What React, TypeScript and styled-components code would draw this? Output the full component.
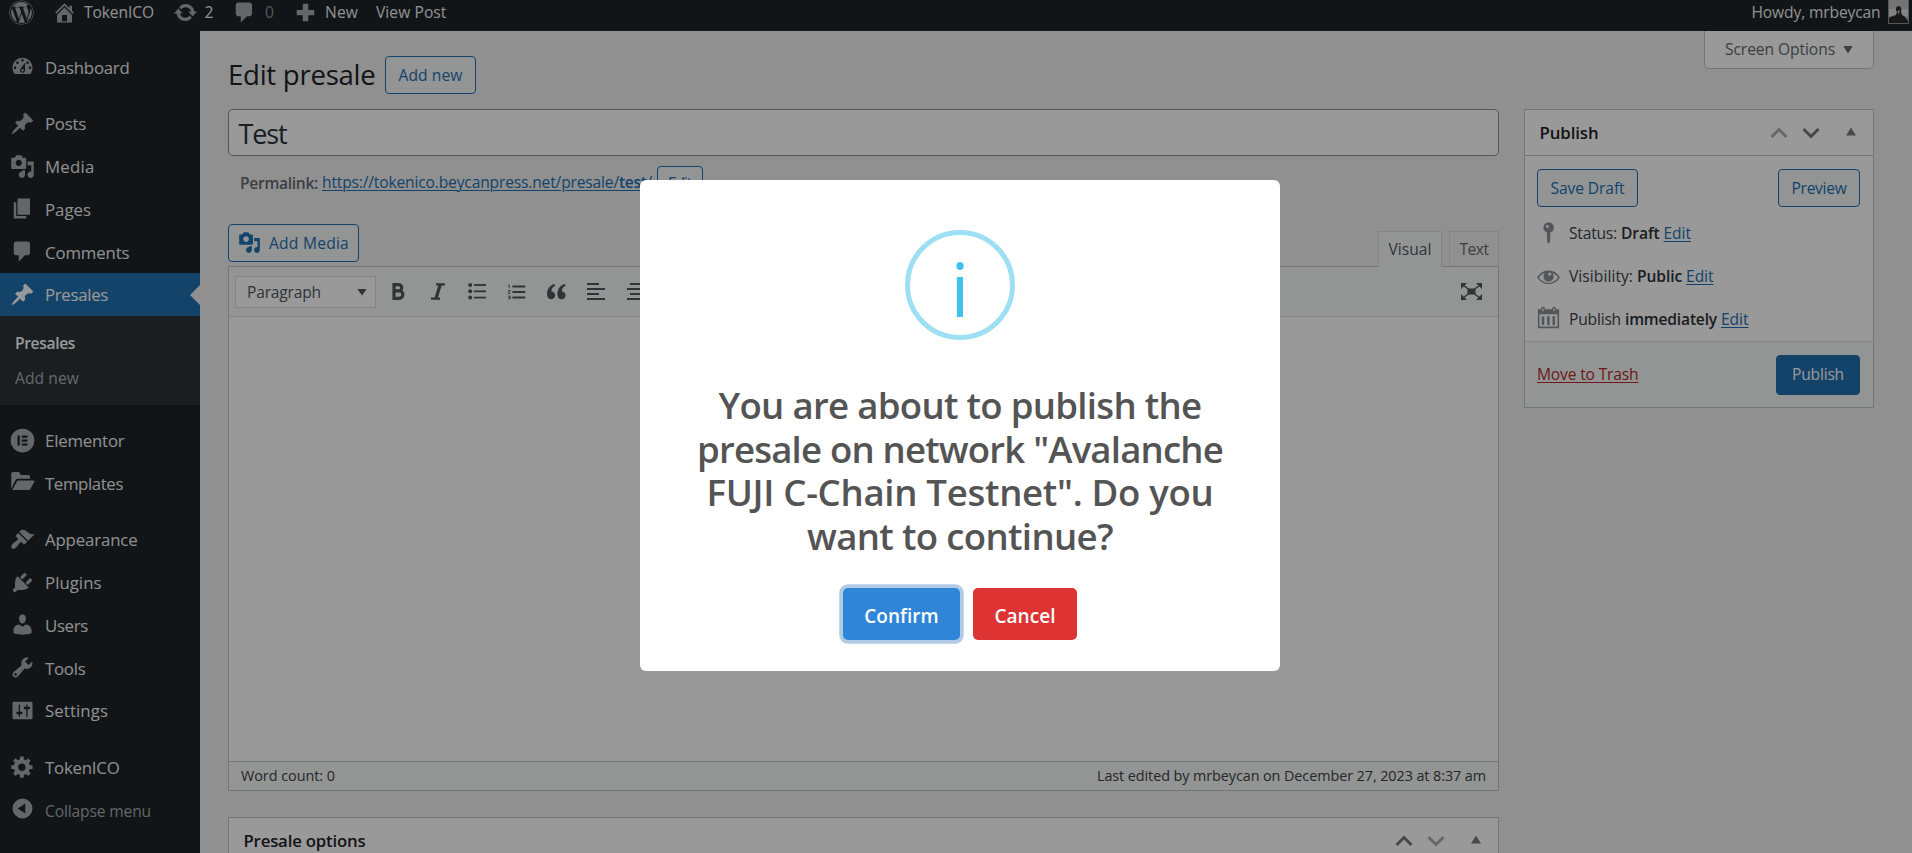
import React, { useLayoutEffect, useRef } from 'react';
import styled, { createGlobalStyle, css } from 'styled-components';
import { FaWordpress } from 'react-icons/fa';
import { MdFormatListNumbered } from 'react-icons/md';

const GlobalStyle = createGlobalStyle`
  *, *::before, *::after { box-sizing: border-box; }
  html, body { margin: 0; padding: 0; overflow: hidden; }
  body {
    background: #f0f0f1;
    color: #3c434a;
    font-family: "Segoe UI", "Open Sans", "Noto Sans", sans-serif;
    font-size: 15.6px;
    line-height: 1.4;
  }
`;

/* ---------- text ---------- */

const TextSpan = styled.span<{ $underline?: boolean }>`
  display: inline-block;
  padding-top: 1.5px;
  white-space: nowrap;
  text-decoration: ${(p) => (p.$underline ? 'underline' : 'none')};
  text-decoration-thickness: 1px;
  text-underline-offset: 2px;
`;

/* Tracks its text so that it takes up the given width in any UI font. */
function Text({ w, underline, children }: { w: number; underline?: boolean; children: React.ReactNode }) {
  const ref = useRef<HTMLSpanElement>(null);
  useLayoutEffect(() => {
    const el = ref.current;
    if (!el) return;
    el.style.letterSpacing = '0px';
    const natural = el.getBoundingClientRect().width;
    const count = (el.textContent || '').length;
    el.style.letterSpacing = `${((w - natural) / count).toFixed(3)}px`;
  }, [w]);
  return (
    <TextSpan ref={ref} $underline={underline}>
      {children}
    </TextSpan>
  );
}

/* ---------- icons ---------- */

const paths = {
  dashboard:
    'M3.76 16h12.48c1.1-1.37 1.76-3.11 1.76-5 0-4.42-3.58-8-8-8s-8 3.58-8 8c0 1.89.66 3.63 1.76 5zM10 4c.55 0 1 .45 1 1s-.45 1-1 1-1-.45-1-1 .45-1 1-1zM6 6c.55 0 1 .45 1 1s-.45 1-1 1-1-.45-1-1 .45-1 1-1zm8 0c.55 0 1 .45 1 1s-.45 1-1 1-1-.45-1-1 .45-1 1-1zm-5.37 5.55L12 7v6c0 1.1-.9 2-2 2s-2-.9-2-2c0-.57.24-1.08.63-1.45zM4 10c.55 0 1 .45 1 1s-.45 1-1 1-1-.45-1-1 .45-1 1-1zm12 0c.55 0 1 .45 1 1s-.45 1-1 1-1-.45-1-1 .45-1 1-1zm-5 3c0-.55-.45-1-1-1s-1 .45-1 1 .45 1 1 1 1-.45 1-1z',
  pin: 'M10.44 3.02l1.82-1.82 6.36 6.35-1.83 1.82c-1.05-.68-2.48-.57-3.41.36l-.75.75c-.92.93-1.04 2.35-.35 3.41l-1.83 1.82-2.41-2.41-2.8 2.79c-.42.42-3.38 2.71-3.8 2.29s1.86-3.39 2.28-3.81l2.79-2.79L4.1 9.36l1.83-1.82c1.05.69 2.48.57 3.4-.36l.75-.75c.93-.92 1.05-2.35.36-3.41z',
  media:
    'M13 11V4c0-.55-.45-1-1-1h-1.67L9 1H5L3.67 3H2c-.55 0-1 .45-1 1v7c0 .55.45 1 1 1h10c.55 0 1-.45 1-1zM7 4.5c1.38 0 2.5 1.12 2.5 2.5S8.38 9.5 7 9.5 4.5 8.38 4.5 7 5.62 4.5 7 4.5zM14 6h5v10.5c0 1.38-1.12 2.5-2.5 2.5S14 17.88 14 16.5s1.12-2.5 2.5-2.5c.17 0 .34.02.5.05V9h-3V6zm-4 8.05V13h2v3.5c0 1.38-1.12 2.5-2.5 2.5S7 17.88 7 16.5 8.12 14 9.5 14c.17 0 .34.02.5.05z',
  page: 'M6 15V2h10v13H6zm-1 1h8v2H3V5h2v11z',
  comment: 'M5 2h9c1.1 0 2 .9 2 2v7c0 1.1-.9 2-2 2h-2l-5 5v-5H5c-1.1 0-2-.9-2-2V4c0-1.1.9-2 2-2z',
  elementor: 'M10 .5a9.5 9.5 0 100 19 9.5 9.5 0 000-19zM6 6h1.8v8H6zM9.4 6H14v1.7H9.4zM9.4 9.2H14v1.7H9.4zM9.4 12.3H14V14H9.4z',
  folder:
    'M1 15.2V3.2c0-1 .6-1.7 1.5-1.7h4.2c.8 0 1 .5 1.3 1.2l.5 1.2h6c.9 0 1.5.5 1.5 1.5v1.600H6.800c-1.300 0-2 .4-2.600 1.400zM1.800 16l3.500-6.500c.4-.8.900-1.100 1.700-1.100H18.900c.7 0 .8.500.5 1.100l-2.900 5.300c-.4.800-.9 1.200-1.800 1.200z',
  appearance:
    'M14.48 11.06L7.41 3.99l1.5-1.5c.5-.56 2.3-.47 3.51.32 1.21.8 1.43 1.28 2.91 2.1 1.18.64 2.45 1.26 4.45.85zm-.71.71L6.7 4.7 4.93 6.47c-.39.39-.39 1.02 0 1.41l1.06 1.06c.39.39.39 1.03 0 1.42-.6.6-1.43 1.11-2.21 1.69-.35.26-.7.53-1.01.84C1.43 14.23.4 16.08 1.4 17.07c.99 1 2.84-.03 4.18-1.36.31-.31.58-.66.85-1.02.57-.78 1.08-1.61 1.69-2.21.39-.39 1.02-.39 1.41 0l1.06 1.06c.39.39 1.02.39 1.41 0z',
  plugins:
    'M13.11 4.36L9.87 7.6 8 5.73l3.24-3.24c.35-.34 1.05-.2 1.56.32.52.51.66 1.21.31 1.55zm-8 1.77l.91-1.12 9.01 9.01-1.19.84c-.71.71-2.63 1.16-3.82 1.16H6.14L4.9 17.26c-.59.59-1.54.59-2.12 0-.59-.58-.59-1.53 0-2.12l1.24-1.24v-3.88c0-1.13.4-3.19 1.09-3.89zm7.26 3.97l3.24-3.24c.34-.35 1.04-.21 1.55.31.52.51.66 1.21.31 1.55l-3.24 3.25z',
  users:
    'M10 9.25c-2.27 0-2.73-3.44-2.73-3.44C7 4.02 7.82 2 9.97 2c2.16 0 2.98 2.02 2.71 3.81 0 0-.41 3.44-2.68 3.44zm0 2.57L12.72 10c2.39 0 4.52 2.33 4.52 4.53v2.49s-3.65 1.13-7.24 1.13c-3.65 0-7.24-1.13-7.24-1.13v-2.49c0-2.25 1.94-4.48 4.47-4.48z',
  tools:
    'M16.68 9.77c-1.34 1.34-3.3 1.67-4.95.99l-5.41 6.52c-.99.99-2.59.99-3.58 0s-.99-2.59 0-3.57l6.52-5.42c-.68-1.65-.35-3.61.99-4.95 1.28-1.28 3.12-1.62 4.72-1.06l-2.89 2.89 2.82 2.82 2.86-2.87c.53 1.58.18 3.39-1.08 4.65zM3.81 16.21c.4.39 1.04.39 1.43 0 .4-.4.4-1.04 0-1.43-.39-.4-1.03-.4-1.43 0-.39.39-.39 1.03 0 1.43z',
  settings:
    'M18 16V4c0-.55-.45-1-1-1H3c-.55 0-1 .45-1 1v12c0 .55.45 1 1 1h14c.55 0 1-.45 1-1zM8 11h1c.55 0 1 .45 1 1s-.45 1-1 1H8v1.5c0 .28-.22.5-.5.5s-.5-.22-.5-.5V13H6c-.55 0-1-.45-1-1s.45-1 1-1h1V5.5c0-.28.22-.5.5-.5s.5.22.5.5V11zm5-2h-1c-.55 0-1-.45-1-1s.45-1 1-1h1V5.5c0-.28.22-.5.5-.5s.5.22.5.5V7h1c.55 0 1 .45 1 1s-.45 1-1 1h-1v5.5c0 .28-.22.5-.5.5s-.5-.22-.5-.5V9z',
  gear: 'M18 12h-2.18c-.17.7-.44 1.35-.81 1.93l1.54 1.54-2.1 2.1-1.54-1.54c-.58.36-1.23.63-1.91.79V19H8v-2.18c-.68-.16-1.33-.43-1.91-.79l-1.54 1.54-2.12-2.12 1.54-1.54c-.36-.58-.63-1.23-.79-1.91H1V9.03h2.17c.16-.7.44-1.35.8-1.94L2.43 5.55l2.1-2.1 1.54 1.54c.58-.37 1.24-.64 1.93-.81V2h3v2.18c.68.16 1.33.43 1.91.79l1.54-1.54 2.12 2.12-1.54 1.54c.36.59.64 1.24.8 1.94H18V12zm-8.5 1.5c1.66 0 3-1.34 3-3s-1.34-3-3-3-3 1.34-3 3 1.34 3 3 3z',
  collapse: 'M10 2a8 8 0 100 16 8 8 0 000-16zM12.200 6v8L6.200 10z',
  home: 'M16 8.5l1.53 1.53-1.06 1.06L10 4.6l-6.47 6.49-1.06-1.06L10 2.5l4 4v-2h2v4zm-6-2.46l6 5.99V18H4v-5.97zM12 17v-5H8v5h4z',
  update:
    'M10.2 3.28c3.53 0 6.43 2.61 6.92 6h2.08l-3.5 4-3.5-4h2.32c-.45-1.97-2.21-3.45-4.32-3.45-1.45 0-2.73.71-3.54 1.78L4.95 5.66C6.23 4.2 8.11 3.28 10.2 3.28zm-.4 13.44c-3.52 0-6.43-2.61-6.92-6H.8l3.5-4c1.17 1.33 2.33 2.67 3.5 4H5.48c.45 1.97 2.21 3.45 4.32 3.45 1.45 0 2.73-.71 3.54-1.78l1.71 1.95c-1.28 1.46-3.15 2.38-5.25 2.38z',
  plus: 'M12.200 3v4.900H17v4.200h-4.800V17H7.800v-4.900H3V7.900h4.800V3z',
  status:
    'M10.100 1a4.200 4.200 0 00-4.200 4.200c0 1.900 1.200 3.400 2.800 4l.2 7.300 1.200 1.700 1.200-1.700.2-7.300a4.200 4.200 0 002.800-4A4.200 4.200 0 0010.100 1zM9.100 3.100a1.200 1.200 0 110 2.400 1.200 1.200 0 010-2.400z',
  eye: 'M18.300 9.500C15 4.900 8.500 3.800 3.900 7.200c-1.200.9-2.200 2.100-3 3.400.2.4.5.8.8 1.200 3.300 4.600 9.600 5.600 14.200 2.400.9-.7 1.700-1.400 2.400-2.400.3-.4.5-.8.8-1.200-.3-.4-.5-.8-.8-1.100zm-8.200-2.300c.5-.5 1.300-.5 1.800 0s.5 1.300 0 1.800-1.300.5-1.800 0-.5-1.300 0-1.800zm-.1 7.700c-3.100 0-6-1.600-7.700-4.200C3.500 9 5.100 7.800 7 7.200c-.7.800-1 1.700-1 2.700 0 2.200 1.700 4.100 4 4.100 2.200 0 4.100-1.700 4.100-4v-.1c0-1-.4-2-1.100-2.700 1.900.6 3.500 1.800 4.700 3.500-1.700 2.600-4.600 4.200-7.700 4.200z',
  calendar:
    'M5.600.5c.9 0 1.500.6 1.500 1.500V2.500h5.800V2a1.500 1.500 0 013 0v.5H18.500v15.300H1.500V2.500H4.100V2C4.100 1.100 4.700.5 5.600.5zM5.100 2v2.200h1V2zM13.900 2v2.200h1V2zM2.800 6.600v9.800h14.400V6.600zM4.600 8.200h2v7H4.600zM8.900 8.200h2v7h-2zM13.200 8.200h2v7h-2z',
};

type IconName = keyof typeof paths;

const IconSvg = styled.svg<{ $size: number }>`
  display: block;
  flex: none;
  width: ${(p) => p.$size}px;
  height: ${(p) => p.$size}px;
  fill: currentColor;
`;

function Icon({ name, size = 25 }: { name: IconName; size?: number }) {
  return (
    <IconSvg $size={size} viewBox="0 0 20 20" fillRule="evenodd">
      <path d={paths[name]} />
    </IconSvg>
  );
}

function Chevron({ up }: { up?: boolean }) {
  return (
    <svg width="18" height="12" viewBox="0 0 18 12" fill="none" stroke="currentColor" strokeWidth="2.900">
      <path d={up ? 'M1.500 10L9 2.500L16.500 10' : 'M1.500 2L9 9.500L16.500 2'} />
    </svg>
  );
}

const Triangle = styled.span<{ $up?: boolean; $w: number; $h: number }>`
  display: block;
  width: ${(p) => p.$w}px;
  height: ${(p) => p.$h}px;
  background: currentColor;
  clip-path: ${(p) => (p.$up ? 'polygon(50% 0, 100% 100%, 0 100%)' : 'polygon(0 0, 100% 0, 50% 100%)')};
`;

/* ---------- admin bar ---------- */

const AdminBar = styled.header`
  display: flex;
  align-items: flex-start;
  flex: none;
  height: 31px;
  padding: 0 3px 0 9px;
  background: #1d2327;
  color: #f0f0f1;
`;

const BarItem = styled.div<{ $gap: number; $inner?: number; $dim?: boolean }>`
  display: flex;
  align-items: center;
  gap: ${(p) => p.$inner ?? 7}px;
  height: 24px;
  margin-left: ${(p) => p.$gap}px;
  color: ${(p) => (p.$dim ? '#8d9195' : 'inherit')};
  svg { color: #a7aaad; }
`;

const BarSpacer = styled.div`
  flex: 1;
`;

const Avatar = styled.span`
  display: block;
  width: 21px;
  height: 24px;
  margin-left: 7.5px;
  border: 1px solid #8c8f94;
  border-top: 0;
  background: #c4c4c4;
  overflow: hidden;
  svg { display: block; }
`;

/* ---------- side menu ---------- */

const Shell = styled.div`
  display: flex;
  flex-direction: column;
  width: 1912px;
  height: 853px;
  overflow: hidden;
`;

const Body = styled.div`
  display: flex;
  flex: 1;
  min-height: 0;
`;

const SideMenu = styled.nav`
  display: flex;
  flex-direction: column;
  flex: none;
  width: 200px;
  padding-top: 14.5px;
  background: #1d2327;
  color: #f0f0f1;
  font-size: 16.8px;
`;

const MenuRow = styled.div<{ $active?: boolean }>`
  position: relative;
  display: flex;
  align-items: center;
  flex: none;
  height: 42.75px;
  padding: 0 10px;
  gap: 10px;
  svg { color: #a7aaad; }
  ${(p) =>
    p.$active &&
    css`
      background: #2271b1;
      color: #fff;
      svg { color: #fff; }
      &::after {
        content: '';
        position: absolute;
        right: 0;
        top: 11.5px;
        border: 10px solid transparent;
        border-right-color: #f0f0f1;
        border-left: 0;
      }
    `}
`;

const MenuGap = styled.div`
  flex: none;
  height: 13.75px;
`;

const SubMenu = styled.div`
  display: flex;
  flex-direction: column;
  flex: none;
  height: 89.25px;
  padding: 10px 15px 0;
  background: #2c3338;
`;

const SubItem = styled.div<{ $current?: boolean }>`
  display: flex;
  align-items: center;
  height: 35.2px;
  font-size: 15.6px;
  font-weight: ${(p) => (p.$current ? 600 : 400)};
  color: ${(p) => (p.$current ? '#fff' : '#a9adb1')};
`;

const CollapseRow = styled(MenuRow)`
  margin-top: 2px;
  color: #a7aaad;
  font-size: 15.6px;
  svg { margin-top: -6px; }
`;

/* ---------- page ---------- */

const Content = styled.main`
  display: flex;
  flex: 1;
  min-width: 0;
  padding: 0 38px 0 28px;
  gap: 25px;
`;

const MainColumn = styled.section`
  display: flex;
  flex-direction: column;
  width: 1271px;
  flex: none;
  > * { flex: none; }
`;

const SideColumn = styled.aside`
  display: flex;
  flex-direction: column;
  width: 350px;
  flex: none;
`;

const ScreenOptions = styled.div`
  display: flex;
  align-items: center;
  align-self: flex-end;
  flex: none;
  gap: 8px;
  width: 170px;
  height: 38px;
  padding: 0 0 0 20px;
  margin-bottom: 40px;
  background: #fff;
  border: 1px solid #c3c4c7;
  border-top: 0;
  border-radius: 0 0 5px 5px;
  color: #646970;
`;

const PageHead = styled.div`
  display: flex;
  align-items: center;
  height: 38px;
  margin: 25px 0 15px;
  gap: 9.5px;
`;

const PageTitle = styled.h1`
  margin: 0;
  padding-bottom: 4px;
  font-size: 27.6px;
  font-weight: 400;
  line-height: 38px;
  color: #1d2327;
`;

const Button = styled.button<{ $h?: number; $px?: number; $solid?: boolean }>`
  display: inline-flex;
  align-items: center;
  flex: none;
  height: ${(p) => p.$h ?? 37.5}px;
  padding: 0 ${(p) => p.$px ?? 12.5}px;
  border: 1px solid #2271b1;
  border-radius: 4px;
  background: ${(p) => (p.$solid ? '#2271b1' : '#f6f7f7')};
  color: ${(p) => (p.$solid ? '#fff' : '#2271b1')};
  font: inherit;
`;

const TitleInput = styled.div`
  display: flex;
  align-items: center;
  height: 47px;
  padding: 2px 9.5px 0;
  border: 1px solid #8c8f94;
  border-radius: 5px;
  background: #fff;
  color: #2c3338;
  font-size: 27px;
`;

const Permalink = styled.div`
  display: flex;
  align-items: center;
  height: 34px;
  margin-top: 10px;
  padding: 0 0 0 12px;
  color: #646970;
  b { font-weight: 600; }
`;

const Link = styled.a`
  color: #2271b1;
  b { font-weight: 600; }
`;

const PermalinkUrl = styled(Link)`
  margin: 0 3.5px 2px 4px;
`;

const EditorTools = styled.div`
  display: flex;
  align-items: flex-end;
  justify-content: space-between;
  height: 42px;
  margin-top: 24px;
`;

const MediaButton = styled(Button)`
  align-self: flex-start;
  gap: 8px;
  padding: 0 9px;
`;

const Tabs = styled.div`
  display: flex;
  gap: 7px;
`;

const Tab = styled.div<{ $active?: boolean }>`
  position: relative;
  z-index: 1;
  display: flex;
  align-items: center;
  justify-content: center;
  width: ${(p) => (p.$active ? 64 : 50)}px;
  height: ${(p) => (p.$active ? 36 : 35)}px;
  margin-bottom: ${(p) => (p.$active ? -1 : 0)}px;
  border: 1px solid #dcdcde;
  border-bottom: 0;
  background: ${(p) => (p.$active ? '#f6f7f7' : '#f0f0f1')};
  color: ${(p) => (p.$active ? '#50575e' : '#646970')};
`;

const Editor = styled.div`
  display: flex;
  flex-direction: column;
  height: 525px;
  border: 1px solid #c3c4c7;
  background: #fff;
`;

const Toolbar = styled.div`
  display: flex;
  align-items: center;
  flex: none;
  height: 50px;
  padding: 0 16px 0 6px;
  background: #f6f7f7;
  border-bottom: 1px solid #dcdcde;
  color: #50575e;
`;

const FormatSelect = styled.div`
  display: flex;
  align-items: center;
  justify-content: space-between;
  width: 141px;
  height: 32px;
  margin-right: 2px;
  padding: 1px 8px 0 11px;
  border: 1px solid #dcdcde;
  background: #fff;
`;

const ToolButton = styled.span`
  display: flex;
  align-items: center;
  justify-content: center;
  width: 39.7px;
  svg { display: block; }
`;

const ToolbarSpacer = styled.span`
  flex: 1;
`;

const Canvas = styled.div`
  flex: 1;
`;

const StatusBar = styled.div`
  display: flex;
  align-items: center;
  justify-content: space-between;
  flex: none;
  height: 29px;
  padding: 0 12px 1px;
  border-top: 1px solid #c3c4c7;
  background: #f6f7f7;
  color: #3c434a;
  font-size: 14.4px;
`;

const Panel = styled.section<{ $mt?: number }>`
  flex: none;
  margin-top: ${(p) => p.$mt ?? 0}px;
  border: 1px solid #c3c4c7;
  background: #fff;
`;

const PanelHead = styled.header`
  display: flex;
  align-items: center;
  height: 46px;
  padding: 0 17px 0 14.5px;
  border-bottom: 1px solid #c3c4c7;
  color: #1d2327;
  font-size: 16.8px;
  font-weight: 600;
`;

const PanelControls = styled.div`
  display: flex;
  align-items: center;
  gap: 14px;
  margin-left: auto;
  color: #787c82;
`;

const ChevronSlot = styled.span<{ $disabled: boolean }>`
  color: ${(p) => (p.$disabled ? '#a7aaad' : '#72777c')};
  svg { display: block; }
`;

const TriangleSlot = styled.span`
  margin: 0 0 2px 12px;
`;

const PublishActions = styled.div`
  display: flex;
  justify-content: space-between;
  padding: 13px 13px 5px 12px;
`;

const MetaRow = styled.div<{ $lift?: number }>`
  display: flex;
  align-items: center;
  height: 43px;
  padding-left: 11px;
  color: #3c434a;
  b { font-weight: 600; color: #2c3338; }
  svg {
    color: #8c8f94;
    margin: 0 8px ${(p) => p.$lift ?? 0}px 0;
  }
`;

const MetaText = styled.span`
  display: flex;
  gap: 4px;
`;

const PublishFooter = styled.footer`
  display: flex;
  align-items: center;
  justify-content: space-between;
  height: 66px;
  padding: 1px 13px 0 12px;
  border-top: 1px solid #dcdcde;
  background: #f6f7f7;
`;

const TrashLink = styled.a`
  color: #b32d2e;
`;

/* ---------- dialog ---------- */

const Overlay = styled.div`
  position: fixed;
  inset: 0;
  z-index: 10;
  display: flex;
  align-items: center;
  justify-content: center;
  padding-left: 8px;
  background: rgba(0, 0, 0, 0.4);
`;

const Dialog = styled.div`
  display: flex;
  flex-direction: column;
  align-items: center;
  width: 640px;
  height: 491px;
  margin-top: -2px;
  padding-top: 50px;
  border-radius: 6px;
  background: #fff;
`;

const InfoMark = styled.div`
  display: flex;
  align-items: center;
  justify-content: center;
  flex: none;
  width: 110px;
  height: 110px;
  padding-top: 5px;
  border: 5px solid #9de0f6;
  border-radius: 50%;
  color: #3fc3ee;
  font-size: 75px;
  line-height: 100px;
`;

const DialogTitle = styled.h2`
  display: flex;
  flex-direction: column;
  align-items: center;
  margin: 42.3px 0 0;
  color: #545454;
  font-size: 36.6px;
  font-weight: 600;
  line-height: 42.2px;
`;

const DialogActions = styled.div`
  display: flex;
  gap: 13px;
  margin-top: 30.7px;
`;

const DialogButton = styled.button<{ $color: string; $focused?: boolean }>`
  display: flex;
  align-items: center;
  justify-content: center;
  width: ${(p) => (p.$focused ? 117 : 104)}px;
  height: 52px;
  padding: 3px 0 0;
  border: 0;
  border-radius: 5px;
  background: ${(p) => p.$color};
  color: #fff;
  font: inherit;
  font-size: 19px;
  font-weight: 600;
  box-shadow: ${(p) => (p.$focused ? '0 0 0 3.75px #b1cbe5' : 'none')};
`;

/* ---------- pieces ---------- */

type MenuEntry = { icon: IconName; label: string; w: number };

const contentMenu: MenuEntry[] = [
  { icon: 'pin', label: 'Posts', w: 41 },
  { icon: 'media', label: 'Media', w: 49.5 },
  { icon: 'page', label: 'Pages', w: 46 },
  { icon: 'comment', label: 'Comments', w: 84.5 },
];
const builderMenu: MenuEntry[] = [
  { icon: 'elementor', label: 'Elementor', w: 79.5 },
  { icon: 'folder', label: 'Templates', w: 78 },
];
const siteMenu: MenuEntry[] = [
  { icon: 'appearance', label: 'Appearance', w: 92.5 },
  { icon: 'plugins', label: 'Plugins', w: 56.5 },
  { icon: 'users', label: 'Users', w: 43 },
  { icon: 'tools', label: 'Tools', w: 40.5 },
  { icon: 'settings', label: 'Settings', w: 63 },
];

function MenuItem({ icon, label, w, active }: MenuEntry & { active?: boolean }) {
  return (
    <MenuRow $active={active}>
      <Icon name={icon} />
      <Text w={w}>{label}</Text>
    </MenuRow>
  );
}

function Controls({ disabled }: { disabled: 'up' | 'down' }) {
  return (
    <PanelControls>
      <ChevronSlot $disabled={disabled === 'up'}>
        <Chevron up />
      </ChevronSlot>
      <ChevronSlot $disabled={disabled === 'down'}>
        <Chevron />
      </ChevronSlot>
      <TriangleSlot>
        <Triangle $up $w={10} $h={8} />
      </TriangleSlot>
    </PanelControls>
  );
}

function AlignLines({ align }: { align: 'left' | 'center' }) {
  return (
    <svg width="18" height="17" viewBox="0 0 18 17" fill="currentColor">
      {[12, 18, 12, 18].map((w, i) => (
        <rect key={i} x={align === 'left' ? 0 : (18 - w) / 2} y={i * 5} width={w} height="2" />
      ))}
    </svg>
  );
}

export default function App() {
  return (
    <>
      <GlobalStyle />
      <Shell>
        <AdminBar>
          <BarItem $gap={0}>
            <FaWordpress size={25} />
          </BarItem>
          <BarItem $gap={18}>
            <Icon name="home" />
            <Text w={70}>TokenICO</Text>
          </BarItem>
          <BarItem $gap={18.5}>
            <Icon name="update" />
            <Text w={9.5}>2</Text>
          </BarItem>
          <BarItem $gap={18} $dim $inner={8}>
            <Icon name="comment" />
            <Text w={9.5}>0</Text>
          </BarItem>
          <BarItem $gap={18} $inner={7.5}>
            <Icon name="plus" />
            <Text w={33}>New</Text>
          </BarItem>
          <BarItem $gap={18}>
            <Text w={70.5}>View Post</Text>
          </BarItem>
          <BarSpacer />
          <BarItem $gap={0}>
            <Text w={129}>Howdy, mrbeycan</Text>
          </BarItem>
          <Avatar>
            <svg width="20" height="23" viewBox="0 0 20 23">
              <rect width="20" height="23" fill="#c2c2c2" />
              <rect y="9" width="20" height="7" fill="#dadada" />
              <path d="M0 23v-5c2-2 5-2 7-3l1-3c-2-2-1-6 1.500-6s3.500 3 2.500 6l1 3c2 1 4 2 6 6v2z" fill="#2b2b2b" />
              <path d="M8 11l3-1-1 5z" fill="#a0a0a0" />
            </svg>
          </Avatar>
        </AdminBar>

        <Body>
          <SideMenu>
            <MenuItem icon="dashboard" label="Dashboard" w={84.5} />
            <MenuGap />
            {contentMenu.map((m) => (
              <MenuItem key={m.label} {...m} />
            ))}
            <MenuItem icon="pin" label="Presales" w={63} active />
            <SubMenu>
              <SubItem $current>
                <Text w={60}>Presales</Text>
              </SubItem>
              <SubItem>
                <Text w={64}>Add new</Text>
              </SubItem>
            </SubMenu>
            <MenuGap />
            {builderMenu.map((m) => (
              <MenuItem key={m.label} {...m} />
            ))}
            <MenuGap />
            {siteMenu.map((m) => (
              <MenuItem key={m.label} {...m} />
            ))}
            <MenuGap />
            <MenuItem icon="gear" label="TokenICO" w={74.5} />
            <CollapseRow>
              <Icon name="collapse" />
              <Text w={106}>Collapse menu</Text>
            </CollapseRow>
          </SideMenu>

          <Content>
            <MainColumn>
              <PageHead>
                <PageTitle>
                  <Text w={147.5}>Edit presale</Text>
                </PageTitle>
                <Button>
                  <Text w={64}>Add new</Text>
                </Button>
              </PageHead>
              <TitleInput>
                <Text w={48}>Test</Text>
              </TitleInput>
              <Permalink>
                <b>
                  <Text w={78}>Permalink:</Text>
                </b>
                <PermalinkUrl>
                  <Text w={297} underline>
                    https://tokenico.beycanpress.net/presale/
                  </Text>
                  <b>
                    <Text w={27.5} underline>test</Text>
                  </b>
                  <Text w={6.5} underline>/</Text>
                </PermalinkUrl>
                <Button $h={34} $px={10.5}>
                  <Text w={23}>Edit</Text>
                </Button>
              </Permalink>
              <EditorTools>
                <MediaButton>
                  <Icon name="media" size={23} />
                  <Text w={80}>Add Media</Text>
                </MediaButton>
                <Tabs>
                  <Tab $active>
                    <Text w={43}>Visual</Text>
                  </Tab>
                  <Tab>
                    <Text w={29}>Text</Text>
                  </Tab>
                </Tabs>
              </EditorTools>
              <Editor>
                <Toolbar>
                  <FormatSelect>
                    <Text w={74}>Paragraph</Text>
                    <Triangle $w={10} $h={7} />
                  </FormatSelect>
                  <ToolButton>
                    <svg width="14" height="17" viewBox="0 0 14 17" fill="none" stroke="currentColor" strokeWidth="3.200">
                      <path d="M3 1.600h4.600a3 3 0 010 6.300H3zM3 7.900h5.200a3.500 3.500 0 010 7.400H3z" />
                    </svg>
                  </ToolButton>
                  <ToolButton>
                    <svg width="14" height="17" viewBox="0 0 14 17" fill="none" stroke="currentColor" strokeWidth="2.300">
                      <path d="M5 1.300h9M0 15.700h9" />
                      <path d="M9.500 1L4.800 16" strokeWidth="3.200" />
                    </svg>
                  </ToolButton>
                  <ToolButton>
                    <svg width="18" height="17" viewBox="0 0 18 17" fill="currentColor">
                      {[2, 8.3, 14.6].map((y) => (
                        <g key={y}>
                          <circle cx="2.200" cy={y} r="2" />
                          <rect x="6" y={y - 0.9} width="12" height="1.800" />
                        </g>
                      ))}
                    </svg>
                  </ToolButton>
                  <ToolButton>
                    <MdFormatListNumbered size={22} />
                  </ToolButton>
                  <ToolButton>
                    <svg width="19" height="16" viewBox="0 0 19 16" fill="currentColor">
                      <path d="M7.500 0C3 1.200 0 4.800 0 10c0 3.500 1.700 5.300 4.200 5.300 2.300 0 4-1.700 4-4s-1.600-3.800-3.600-3.900C4.300 4.500 5.500 3 8.200 2zM17.900 0c-4.500 1.200-7.500 4.800-7.500 10 0 3.500 1.700 5.300 4.200 5.300 2.300 0 4-1.700 4-4S17 7.500 15 7.400c-.3-2.900.9-4.400 3.600-5.400z" />
                    </svg>
                  </ToolButton>
                  <ToolButton>
                    <AlignLines align="left" />
                  </ToolButton>
                  <ToolButton>
                    <AlignLines align="center" />
                  </ToolButton>
                  <ToolbarSpacer />
                  <svg width="21" height="17" viewBox="0 0 21 17" fill="currentColor">
                    <path d="M2 2L19 15M19 2L2 15" stroke="currentColor" strokeWidth="1.500" />
                    <path d="M0 0h6L0 6zM21 0h-6L21 6zM0 17h6L0 11zM21 17h-6L21 11z" />
                    <rect x="6.500" y="5.500" width="8" height="6" />
                  </svg>
                </Toolbar>
                <Canvas />
                <StatusBar>
                  <Text w={94}>Word count: 0</Text>
                  <Text w={389}>Last edited by mrbeycan on December 27, 2023 at 8:37 am</Text>
                </StatusBar>
              </Editor>
              <Panel $mt={26}>
                <PanelHead>
                  <Text w={122}>Presale options</Text>
                  <Controls disabled="down" />
                </PanelHead>
              </Panel>
            </MainColumn>

            <SideColumn>
              <ScreenOptions>
                <Text w={110}>Screen Options</Text>
                <Triangle $w={10} $h={8} />
              </ScreenOptions>
              <Panel>
                <PanelHead>
                  <Text w={59}>Publish</Text>
                  <Controls disabled="up" />
                </PanelHead>
                <PublishActions>
                  <Button>
                    <Text w={74}>Save Draft</Text>
                  </Button>
                  <Button>
                    <Text w={55}>Preview</Text>
                  </Button>
                </PublishActions>
                <MetaRow>
                  <Icon name="status" />
                  <MetaText>
                    <Text w={48}>Status:</Text>
                    <b><Text w={38.5}>Draft</Text></b>
                    <Link><Text w={27.5} underline>Edit</Text></Link>
                  </MetaText>
                </MetaRow>
                <MetaRow>
                  <Icon name="eye" />
                  <MetaText>
                    <Text w={64}>Visibility:</Text>
                    <b><Text w={45}>Public</Text></b>
                    <Link><Text w={27.5} underline>Edit</Text></Link>
                  </MetaText>
                </MetaRow>
                <MetaRow $lift={2}>
                  <Icon name="calendar" />
                  <MetaText>
                    <Text w={52}>Publish</Text>
                    <b><Text w={92}>immediately</Text></b>
                    <Link><Text w={27.5} underline>Edit</Text></Link>
                  </MetaText>
                </MetaRow>
                <PublishFooter>
                  <TrashLink>
                    <Text w={101.5} underline>Move to Trash</Text>
                  </TrashLink>
                  <Button $solid $h={40} $px={15}>
                    <Text w={52}>Publish</Text>
                  </Button>
                </PublishFooter>
              </Panel>
            </SideColumn>
          </Content>
        </Body>
      </Shell>

      <Overlay>
        <Dialog role="dialog">
          <InfoMark>i</InfoMark>
          <DialogTitle>
            <Text w={483}>You are about to publish the</Text>
            <Text w={526}>presale on network "Avalanche</Text>
            <Text w={507}>FUJI C-Chain Testnet". Do you</Text>
            <Text w={306}>want to continue?</Text>
          </DialogTitle>
          <DialogActions>
            <DialogButton $color="#2f85d7" $focused>
              <Text w={74.5}>Confirm</Text>
            </DialogButton>
            <DialogButton $color="#dd3333">
              <Text w={61}>Cancel</Text>
            </DialogButton>
          </DialogActions>
        </Dialog>
      </Overlay>
    </>
  );
}
